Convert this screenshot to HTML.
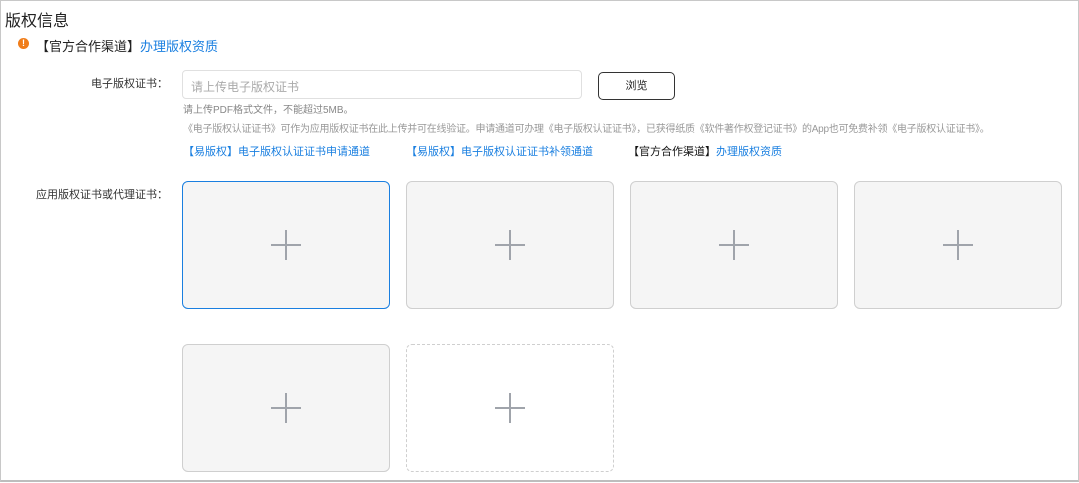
<!DOCTYPE html>
<html><head><meta charset="utf-8"><style>
*{margin:0;padding:0;box-sizing:border-box}
body{width:1079px;height:483px;background:#fff;font-family:"Liberation Sans","Noto Sans CJK SC",sans-serif;position:relative;overflow:hidden}
.frame{position:absolute;left:0;top:0;width:1079px;height:482px;border:1px solid #c8c8c8;border-bottom:2px solid #bdbdbd}
.a{position:absolute;white-space:nowrap}
.blue{color:#1a7fe0}
.box{position:absolute;width:208px;height:128px;border:1px solid #cfcfcf;border-radius:6px;background:#f5f5f5}
.box.sel{border-color:#1a7fe0}
.box.dash{border:1px dashed #cfcfcf;background:#fff}
.box:before,.box:after{content:"";position:absolute;background:#a0a4ab;left:50%;top:50%}
.box:before{width:30px;height:2px;margin:-1px 0 0 -15px}
.box:after{width:2px;height:30px;margin:-15px 0 0 -1px}
</style></head><body>
<div class="frame"></div>
<div class="a" style="left:5px;top:7px;font-size:16px;color:#222">版权信息</div>
<div class="a" style="left:18px;top:38px;width:11px;height:11px;border-radius:50%;background:#f07d1a;color:#fff;font-size:9px;font-weight:bold;line-height:11px;text-align:center">!</div>
<div class="a" style="left:36px;top:36px;font-size:13px;color:#222">【官方合作渠道】<span class="blue">办理版权资质</span></div>
<div class="a" style="left:60px;top:75px;width:108px;text-align:right;font-size:11px;color:#333">电子版权证书：</div>
<div class="a" style="left:182px;top:70px;width:400px;height:29px;border:1px solid #e0e0e0;border-radius:4px;font-size:12px;color:#aaa;padding:7px 8px">请上传电子版权证书</div>
<div class="a" style="left:598px;top:72px;width:77px;height:28px;border:1px solid #333;border-radius:5px;font-size:11px;color:#222;text-align:center;line-height:26px">浏览</div>
<div class="a" style="left:183px;top:101px;font-size:10px;color:#888">请上传PDF格式文件，不能超过5MB。</div>
<div class="a" style="left:183px;top:120px;font-size:10px;color:#999;letter-spacing:-0.25px">《电子版权认证证书》可作为应用版权证书在此上传并可在线验证。申请通道可办理《电子版权认证证书》，已获得纸质《软件著作权登记证书》的App也可免费补领《电子版权认证证书》。</div>
<div class="a blue" style="left:183px;top:143px;font-size:11px">【易版权】电子版权认证证书申请通道</div>
<div class="a blue" style="left:406px;top:143px;font-size:11px">【易版权】电子版权认证证书补领通道</div>
<div class="a" style="left:628px;top:143px;font-size:11px;color:#111">【官方合作渠道】<span class="blue">办理版权资质</span></div>
<div class="a" style="left:30px;top:186px;width:138px;text-align:right;font-size:11px;color:#333">应用版权证书或代理证书：</div>
<div class="box sel" style="left:182px;top:181px"></div>
<div class="box" style="left:406px;top:181px"></div>
<div class="box" style="left:630px;top:181px"></div>
<div class="box" style="left:854px;top:181px"></div>
<div class="box" style="left:182px;top:344px"></div>
<div class="box dash" style="left:406px;top:344px"></div>
</body></html>
